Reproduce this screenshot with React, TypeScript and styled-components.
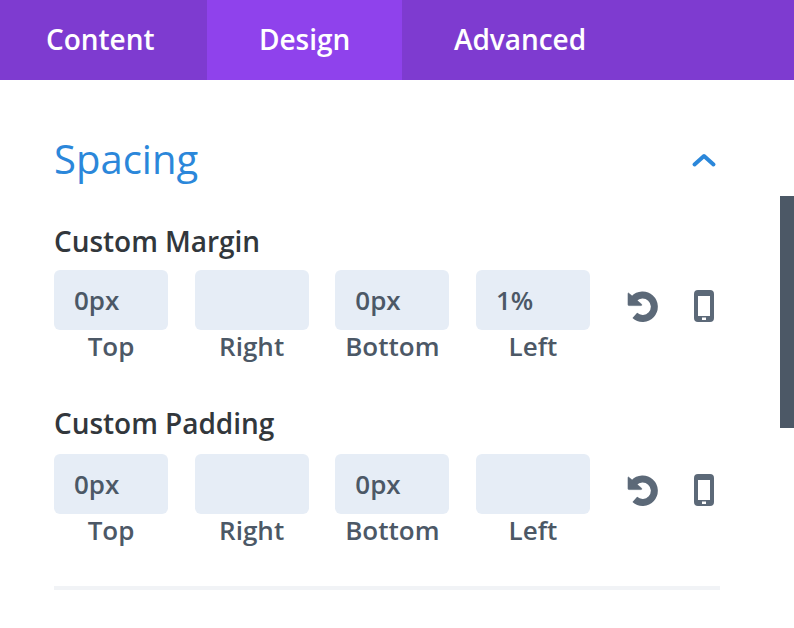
import React from "react";
import styled, { createGlobalStyle } from "styled-components";

const GlobalStyle = createGlobalStyle`
  * { box-sizing: border-box; }
  body { margin: 0; background: #fff; font-family: "Open Sans", sans-serif; font-weight: 600; overflow: hidden; }
`;

const Panel = styled.main`
  position: relative;
  width: 794px;
  height: 628px;
  background: #fff;
`;

const Tabs = styled.nav`
  display: flex;
  height: 80px;
  background: #7e3bd0;
`;

const Tab = styled.button<{ $width: number; $left: number; $active?: boolean }>`
  width: ${(p) => p.$width}px;
  height: 80px;
  padding: 0 0 2px ${(p) => p.$left}px;
  border: 0;
  background: ${(p) => (p.$active ? "#8f42ec" : "transparent")};
  color: #fff;
  font: 600 28px/38px "Open Sans", sans-serif;
  letter-spacing: -0.04px;
  text-align: left;
`;

const Section = styled.section`
  width: 666px;
  height: 510px;
  margin-left: 54px;
  padding-top: 51px;
  border-bottom: 4px solid #f1f3f6;
`;

const SectionHeader = styled.header`
  display: flex;
  align-items: center;
  justify-content: space-between;
  height: 56px;
`;

const Title = styled.h2`
  margin: 0;
  color: #2b87da;
  font-size: 40px;
  font-weight: 400;
  line-height: 56px;
`;

const Chevron = styled.svg`
  display: block;
  width: 32px;
  height: 24px;
  margin-top: 2px;
`;

const Setting = styled.div<{ $top: number; $gap: number }>`
  padding-top: ${(p) => p.$top}px;
  & > h3 { margin-bottom: ${(p) => p.$gap}px; }
`;

const SettingName = styled.h3`
  margin: 0;
  color: #32373c;
  font-size: 28px;
  font-weight: 600;
  line-height: 38px;
  letter-spacing: -0.04px;
`;

const SettingRow = styled.div`
  display: flex;
  height: 94px;
`;

const Fields = styled.div`
  display: grid;
  grid-template-columns: repeat(4, 114px);
  column-gap: 26.67px;
  width: 536px;
`;

const Field = styled.label`
  display: flex;
  flex-direction: column;
  align-items: center;
  color: #4c5866;
  font-size: 26px;
  line-height: 32px;
`;

const Value = styled.input`
  width: 114px;
  height: 60px;
  padding: 0 20px 0;
  border: 0;
  border-radius: 6px;
  outline: 0;
  background: #e6edf6;
  color: #4c5866;
  font: 600 26px/34px "Open Sans", sans-serif;
`;

const Actions = styled.div`
  display: flex;
  gap: 34px;
  margin: 20px 0 0 36px;
`;

const ActionIcon = styled.svg<{ $width: number }>`
  display: block;
  width: ${(p) => p.$width}px;
  height: 32px;
`;

const ScrollThumb = styled.div`
  position: absolute;
  top: 196px;
  right: 0;
  width: 14px;
  height: 232px;
  background: #4c5866;
`;

const sides = ["Top", "Right", "Bottom", "Left"];

function SpacingSetting({ name, values, top, gap }: { name: string; values: string[]; top: number; gap: number }) {
  return (
    <Setting $top={top} $gap={gap}>
      <SettingName>{name}</SettingName>
      <SettingRow>
        <Fields>
          {sides.map((side, i) => (
            <Field key={side}>
              <Value defaultValue={values[i]} />
              {side}
            </Field>
          ))}
        </Fields>
        <Actions>
          <ActionIcon $width={34} viewBox="0 0 34 32">
            <path d="M8 8.8A11.7 11.7 0 1 1 8.8 25.4" fill="none" stroke="#5c6978" strokeWidth="7" />
            <path d="M2.4 3L6.5 6.2L10 9.5L15.6 14.2Q16.2 15.6 15 15.6H3Q2 15.6 2 14.6V3.2Z" fill="#5c6978" stroke="#5c6978" strokeWidth=".6" strokeLinejoin="round" />
          </ActionIcon>
          <ActionIcon $width={20} viewBox="0 0 20 32">
            <path fill="#5c6978" fillRule="evenodd" d="M4 0H16Q20 0 20 4V28Q20 32 16 32H4Q0 32 0 28V4Q0 0 4 0ZM4 6V26H16V6ZM8 27.5V30H12V27.5Z" />
          </ActionIcon>
        </Actions>
      </SettingRow>
    </Setting>
  );
}

export default function App() {
  return (
    <>
      <GlobalStyle />
      <Panel>
        <Tabs>
          <Tab $width={207} $left={46}>Content</Tab>
          <Tab $width={195} $left={52} $active>Design</Tab>
          <Tab $width={235} $left={52}>Advanced</Tab>
        </Tabs>
        <Section>
          <SectionHeader>
            <Title>Spacing</Title>
            <Chevron viewBox="0 0 32 24">
              <path d="M6.5 16.5L16 8L25.5 16.5" fill="none" stroke="#2b87da" strokeWidth="4" strokeLinecap="round" strokeLinejoin="round" />
            </Chevron>
          </SectionHeader>
          <SpacingSetting name="Custom Margin" values={["0px", "", "0px", "1%"]} top={35} gap={10} />
          <SpacingSetting name="Custom Padding" values={["0px", "", "0px", ""]} top={40} gap={12} />
        </Section>
        <ScrollThumb />
      </Panel>
    </>
  );
}
